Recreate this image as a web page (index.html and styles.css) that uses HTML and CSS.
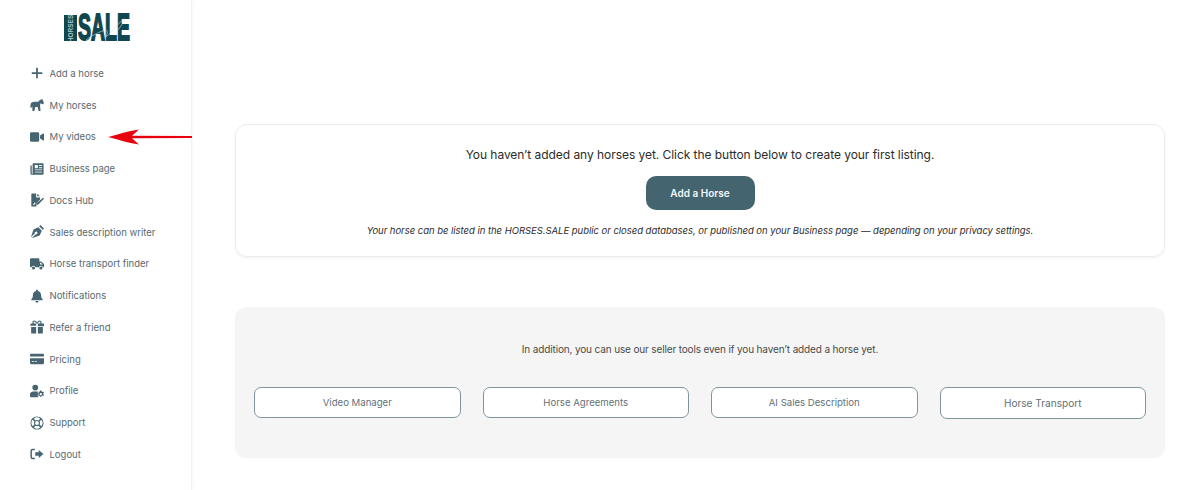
FILE: index.html
```html
<!DOCTYPE html>
<html lang="en">
<head>
<meta charset="utf-8">
<title>My horses</title>
<link rel="stylesheet" href="styles.css">
</head>
<body>
<div class="app">
  <aside class="sidebar">
    <div class="logo">
      <span class="logo-box"><span class="logo-horses">HORSES</span></span>
      <span class="logo-sale">SALE</span>
      <svg class="logo-script" viewBox="0 0 52 26" aria-hidden="true"><path d="M8 25C16 19 22 17 27 15c3-1 3 4 1 6-1 2 3-1 7-6 3-4 9-10 11-11 2 0-3 7-6 11"/></svg>
    </div>
    <nav class="nav">
      <a class="nav-item"><svg class="ico" viewBox="0 0 16 16"><path d="M7 2h2v5h5v2H9v5H7V9H2V7h5z"/></svg>Add a horse</a>
      <a class="nav-item"><svg class="ico" viewBox="0 0 16 16"><path d="M14 .8l.6 1.700 1.200 3-.6 1.700-2-.4-1.200-1-.5 2.500.5 6.500h-2.200l-1-4.500H6l-1 4.500H2.800l-.2-5.500-.7 1.700-1.700-.5.500-3.200C1.200 5 3 4.300 5 4.300h4.500c1-1.500 2.700-2.700 3.700-2.500z"/></svg>My horses</a>
      <a class="nav-item"><svg class="ico" viewBox="0 0 16 16"><path d="M1.500 2.500h7.500a1.500 1.500 0 0 1 1.500 1.500v8a1.500 1.500 0 0 1-1.500 1.500H1.500A1.500 1.500 0 0 1 0 12V4a1.500 1.500 0 0 1 1.500-1.500zM11.500 6.300 15 4c.5-.3 1-.1 1 .5v7c0 .6-.5.8-1 .5l-3.500-2.300z"/></svg>My videos</a>
      <a class="nav-item"><svg class="ico" viewBox="0 0 16 16"><path fill-rule="evenodd" d="M3.500 1.500h11a1 1 0 0 1 1 1v11a1 1 0 0 1-1 1H2a1.500 1.500 0 0 1-1.500-1.500V4h1.500v9a.5.5 0 0 0 1 0V2zM5.500 3.500v3.500h3.500V3.500zm4.800 0v1h3.500v-1zm0 2.500v1h3.500V6zM5.500 8.500v1h8.300v-1zm0 2.500v1h8.300v-1z"/></svg>Business page</a>
      <a class="nav-item"><svg class="ico" viewBox="0 0 16 16"><path fill-rule="evenodd" d="M2.500 .5H7v4.500h4.500v2.500L8 11l-.8 2.500.2 2H2.500a1 1 0 0 1-1-1V1.500a1 1 0 0 1 1-1zM8.200.8l3 3h-3zM3.500 13l2-2.500 1 1-2 2.500zM15 5.500l1 1.200-6.500 6.300-2 .5.500-2z"/></svg>Docs Hub</a>
      <a class="nav-item"><svg class="ico" viewBox="0 0 16 16"><path fill-rule="evenodd" d="M10.500 1.500 14.500 5.500 16 4 12 0zM9.500 2.500 4 5 1 14 5.500 9.500a1.500 1.500 0 1 1 1 1L2 15l9-3 2.500-5.500z"/></svg>Sales description writer</a>
      <a class="nav-item"><svg class="ico" viewBox="0 0 16 16"><path fill-rule="evenodd" d="M1.200 1.500h8.300a1.200 1.200 0 0 1 1.200 1.200V5H13l3 3v3.800h-1.100a2.500 2.500 0 0 0-4.800 0H6.400a2.500 2.500 0 0 0-4.800 0H1.200A1.200 1.200 0 0 1 0 10.600V2.700a1.200 1.200 0 0 1 1.200-1.200zm10.300 5v2.200h3L12.500 6.500zM4 10.800a1.800 1.800 0 1 1 0 3.600 1.800 1.800 0 0 1 0-3.600zm8.500 0a1.800 1.800 0 1 1 0 3.600 1.800 1.800 0 0 1 0-3.600z"/></svg>Horse transport finder</a>
      <a class="nav-item"><svg class="ico" viewBox="0 0 16 16"><path d="M8 .5c.6 0 1 .4 1 1v.8c2.300.4 3.700 2.300 3.700 4.700 0 3 1 3.800 1.800 4.800.3.400 0 1-.5 1H2c-.5 0-.8-.6-.5-1 .8-1 1.800-1.800 1.800-4.800 0-2.400 1.400-4.300 3.700-4.700v-.8c0-.6.400-1 1-1zM6.200 13.800h3.600a1.800 1.800 0 0 1-3.600 0z"/></svg>Notifications</a>
      <a class="nav-item"><svg class="ico" viewBox="0 0 16 16"><path fill-rule="evenodd" d="M4.800 .5C6 .5 7.300 1.500 8 3 8.700 1.500 10 .5 11.200.5c1.300 0 2.100 1 2.100 2.100 0 .6-.2 1.100-.4 1.400h2.600a.5.500 0 0 1 .5.5v2.700H9V4H7v2.700H.5V4.500A.5.500 0 0 1 1 4h2.100c-.2-.3-.4-.8-.4-1.400C2.700 1.500 3.500.5 4.800.5zm0 1.300c-.5 0-.8.3-.8.800 0 .5.300 1 .8 1.400H7C6.500 2.800 5.600 1.800 4.800 1.800zm6.400 0c-.8 0-1.700 1-2.200 2.200h2.200c.5-.4.800-.9.800-1.400 0-.5-.3-.8-.8-.8zM1.300 8h5.700v7.500H2.300a1 1 0 0 1-1-1zM9 8h5.700v6.500a1 1 0 0 1-1 1H9z"/></svg>Refer a friend</a>
      <a class="nav-item"><svg class="ico" viewBox="0 0 16 16"><path fill-rule="evenodd" d="M1.300 2h13.400A1.300 1.300 0 0 1 16 3.300V5H0V3.300A1.300 1.300 0 0 1 1.300 2zM0 7h16v5.700a1.300 1.300 0 0 1-1.300 1.300H1.300A1.300 1.300 0 0 1 0 12.700zm2 3.500v1h3v-1zm4 0v1h2v-1z"/></svg>Pricing</a>
      <a class="nav-item"><svg class="ico" viewBox="0 0 16 16"><path fill-rule="evenodd" d="M6 .8a3.300 3.300 0 1 1 0 6.600A3.300 3.300 0 0 1 6 .8zM3.500 8.500h5c.6 0 1 .1 1.400.3l-.6 6.200H1a1 1 0 0 1-1-1V12C0 10 1.500 8.500 3.500 8.500zM13 7.500l.4 1.100 1.100.4 1-.5.500 1.200-.8.8v1.200l.8.8-.5 1.200-1-.5-1.100.4-.4 1.100h-1.400l-.4-1.100-1.100-.4-1 .5-.5-1.200.8-.8v-1.200l-.8-.8.5-1.200 1 .5 1.100-.4.400-1.100zm-.7 2.900a1.300 1.300 0 1 0 0 2.600 1.300 1.300 0 0 0 0-2.600z"/></svg>Profile</a>
      <a class="nav-item"><svg class="ico" viewBox="0 0 16 16"><path fill-rule="evenodd" d="M8 .5a7.500 7.500 0 1 1 0 15 7.500 7.500 0 0 1 0-15zM4.300 3l2 2a3.500 3.500 0 0 1 3.400 0l2-2a6 6 0 0 0-7.400 0zM3 4.300A6 6 0 0 0 3 11.700l2-2a3.500 3.500 0 0 1 0-3.400zm10 0-2 2a3.500 3.500 0 0 1 0 3.400l2 2a6 6 0 0 0 0-7.400zM8 5.800a2.200 2.200 0 1 0 0 4.400 2.200 2.200 0 0 0 0-4.400zm-1.700 5.200-2 2a6 6 0 0 0 7.400 0l-2-2a3.500 3.500 0 0 1-3.400 0z"/></svg>Support</a>
      <a class="nav-item"><svg class="ico" viewBox="0 0 16 16"><path d="M5.500 2v1.700H3a.8.8 0 0 0-.8.8v7c0 .4.400.8.8.8h2.500V14H3a2.500 2.500 0 0 1-2.500-2.500v-7A2.500 2.500 0 0 1 3 2zM10 3.500l5.300 4.500L10 12.500V10H6V6h4z"/></svg>Logout</a>
    </nav>
  </aside>
  <main class="main">
    <section class="card">
      <p class="lead">You haven’t added any horses yet. Click the button below to create your first listing.</p>
      <a class="primary">Add a Horse</a>
      <p class="note">Your horse can be listed in the HORSES.SALE public or closed databases, or published on your Business page — depending on your privacy settings.</p>
    </section>
    <section class="tools">
      <p class="tools-text">In addition, you can use our seller tools even if you haven’t added a horse yet.</p>
      <div class="tool-row">
        <a class="tool">Video Manager</a>
        <a class="tool">Horse Agreements</a>
        <a class="tool">AI Sales Description</a>
        <a class="tool tool-last">Horse Transport</a>
      </div>
    </section>
  </main>
</div>
<svg class="arrow" viewBox="0 0 84 16" aria-hidden="true"><path d="M0 8 C8 6 20 2 31 .5 L24 6.800 L84 7 V9 L24 9.200 L31 15.500 C20 14 8 10 0 8z"/></svg>
</body>
</html>
```
FILE: styles.css
```css
* { box-sizing: border-box; }
html, body { margin: 0; height: 100%; overflow: hidden; }
body { font-family: Inter, "Liberation Sans", sans-serif; background: #fff; color: #222; position: relative; }
p { margin: 0; }
.app { display: flex; height: 490px; }
.sidebar {
  width: 192px; flex: none; height: 100%;
  border-right: 1px solid #f1f2f2;
  box-shadow: 1px 0 3px rgba(0,0,0,.03);
  display: flex; flex-direction: column;
}
.logo { position: relative; display: flex; width: 66px; height: 26px; margin: 15px 0 16.5px 64px; align-items: stretch; gap: 1px; }
.logo-box { width: 13px; flex: none; background: #0f4650; display: flex; align-items: center; justify-content: center; overflow: hidden; }
.logo-horses { font: 700 6.5px "Liberation Sans", sans-serif; color: #a9c2c6; transform: rotate(-90deg); white-space: nowrap; }
.logo-sale {
  font: 700 36px/26px "Liberation Sans", sans-serif; color: #0f4650;
  transform: scaleX(.54); transform-origin: 0 50%; -webkit-text-stroke: 1.8px #0f4650;
}
.logo-script { position: absolute; left: 14px; top: 0; width: 52px; height: 26px; fill: none; stroke: #cfe0e0; stroke-width: .6; }
.nav { display: flex; flex-direction: column; }
.nav-item {
  display: flex; align-items: center; height: 31.75px; padding-left: 30px;
  font-size: 9.5px; color: #566a71; white-space: nowrap;
}
.ico { width: 14px; height: 14px; fill: #466570; margin-right: 5.5px; flex: none; }
.main { flex: 1; padding: 124px 35px 0 43px; display: flex; flex-direction: column; gap: 50px; }
.card {
  height: 133px; border: 1px solid #ececec; border-radius: 12px;
  box-shadow: 0 1px 3px rgba(0,0,0,.06);
  display: flex; flex-direction: column; align-items: center; padding-top: 21px;
}
.lead { font-size: 12px; letter-spacing: -.05px; line-height: 18px; color: #2b2b2b; }
.primary {
  width: 109px; height: 34px; margin-top: 12px; border-radius: 10px;
  background: #446570; color: #f3f6f7; font-size: 10px; font-weight: 600;
  display: flex; align-items: center; justify-content: center;
}
.note { font-size: 9.5px; letter-spacing: -.03px; font-style: italic; line-height: 14px; margin-top: 14px; color: #2b2b2b; }
.tools {
  height: 150px; background: #f5f5f5; border-radius: 12px;
  box-shadow: 0 1px 2px rgba(0,0,0,.06);
  padding: 34px 19px 0;
  display: flex; flex-direction: column;
}
.tools-text { font-size: 10px; letter-spacing: -.14px; line-height: 16px; text-align: center; color: #4a4a4a; }
.tool-row { display: grid; grid-template-columns: repeat(4, 1fr); gap: 22px; margin-top: 30px; }
.tool {
  height: 31px; background: #fff; border: 1px solid #7f959b; border-radius: 7px;
  display: flex; align-items: center; justify-content: center;
  font-size: 9.6px; color: #5f7279;
}
.tool-last { font-size: 10.1px; height: 31.5px; }
.arrow { position: absolute; left: 108px; top: 129px; width: 84px; height: 16px; fill: #e8000f; }
```
